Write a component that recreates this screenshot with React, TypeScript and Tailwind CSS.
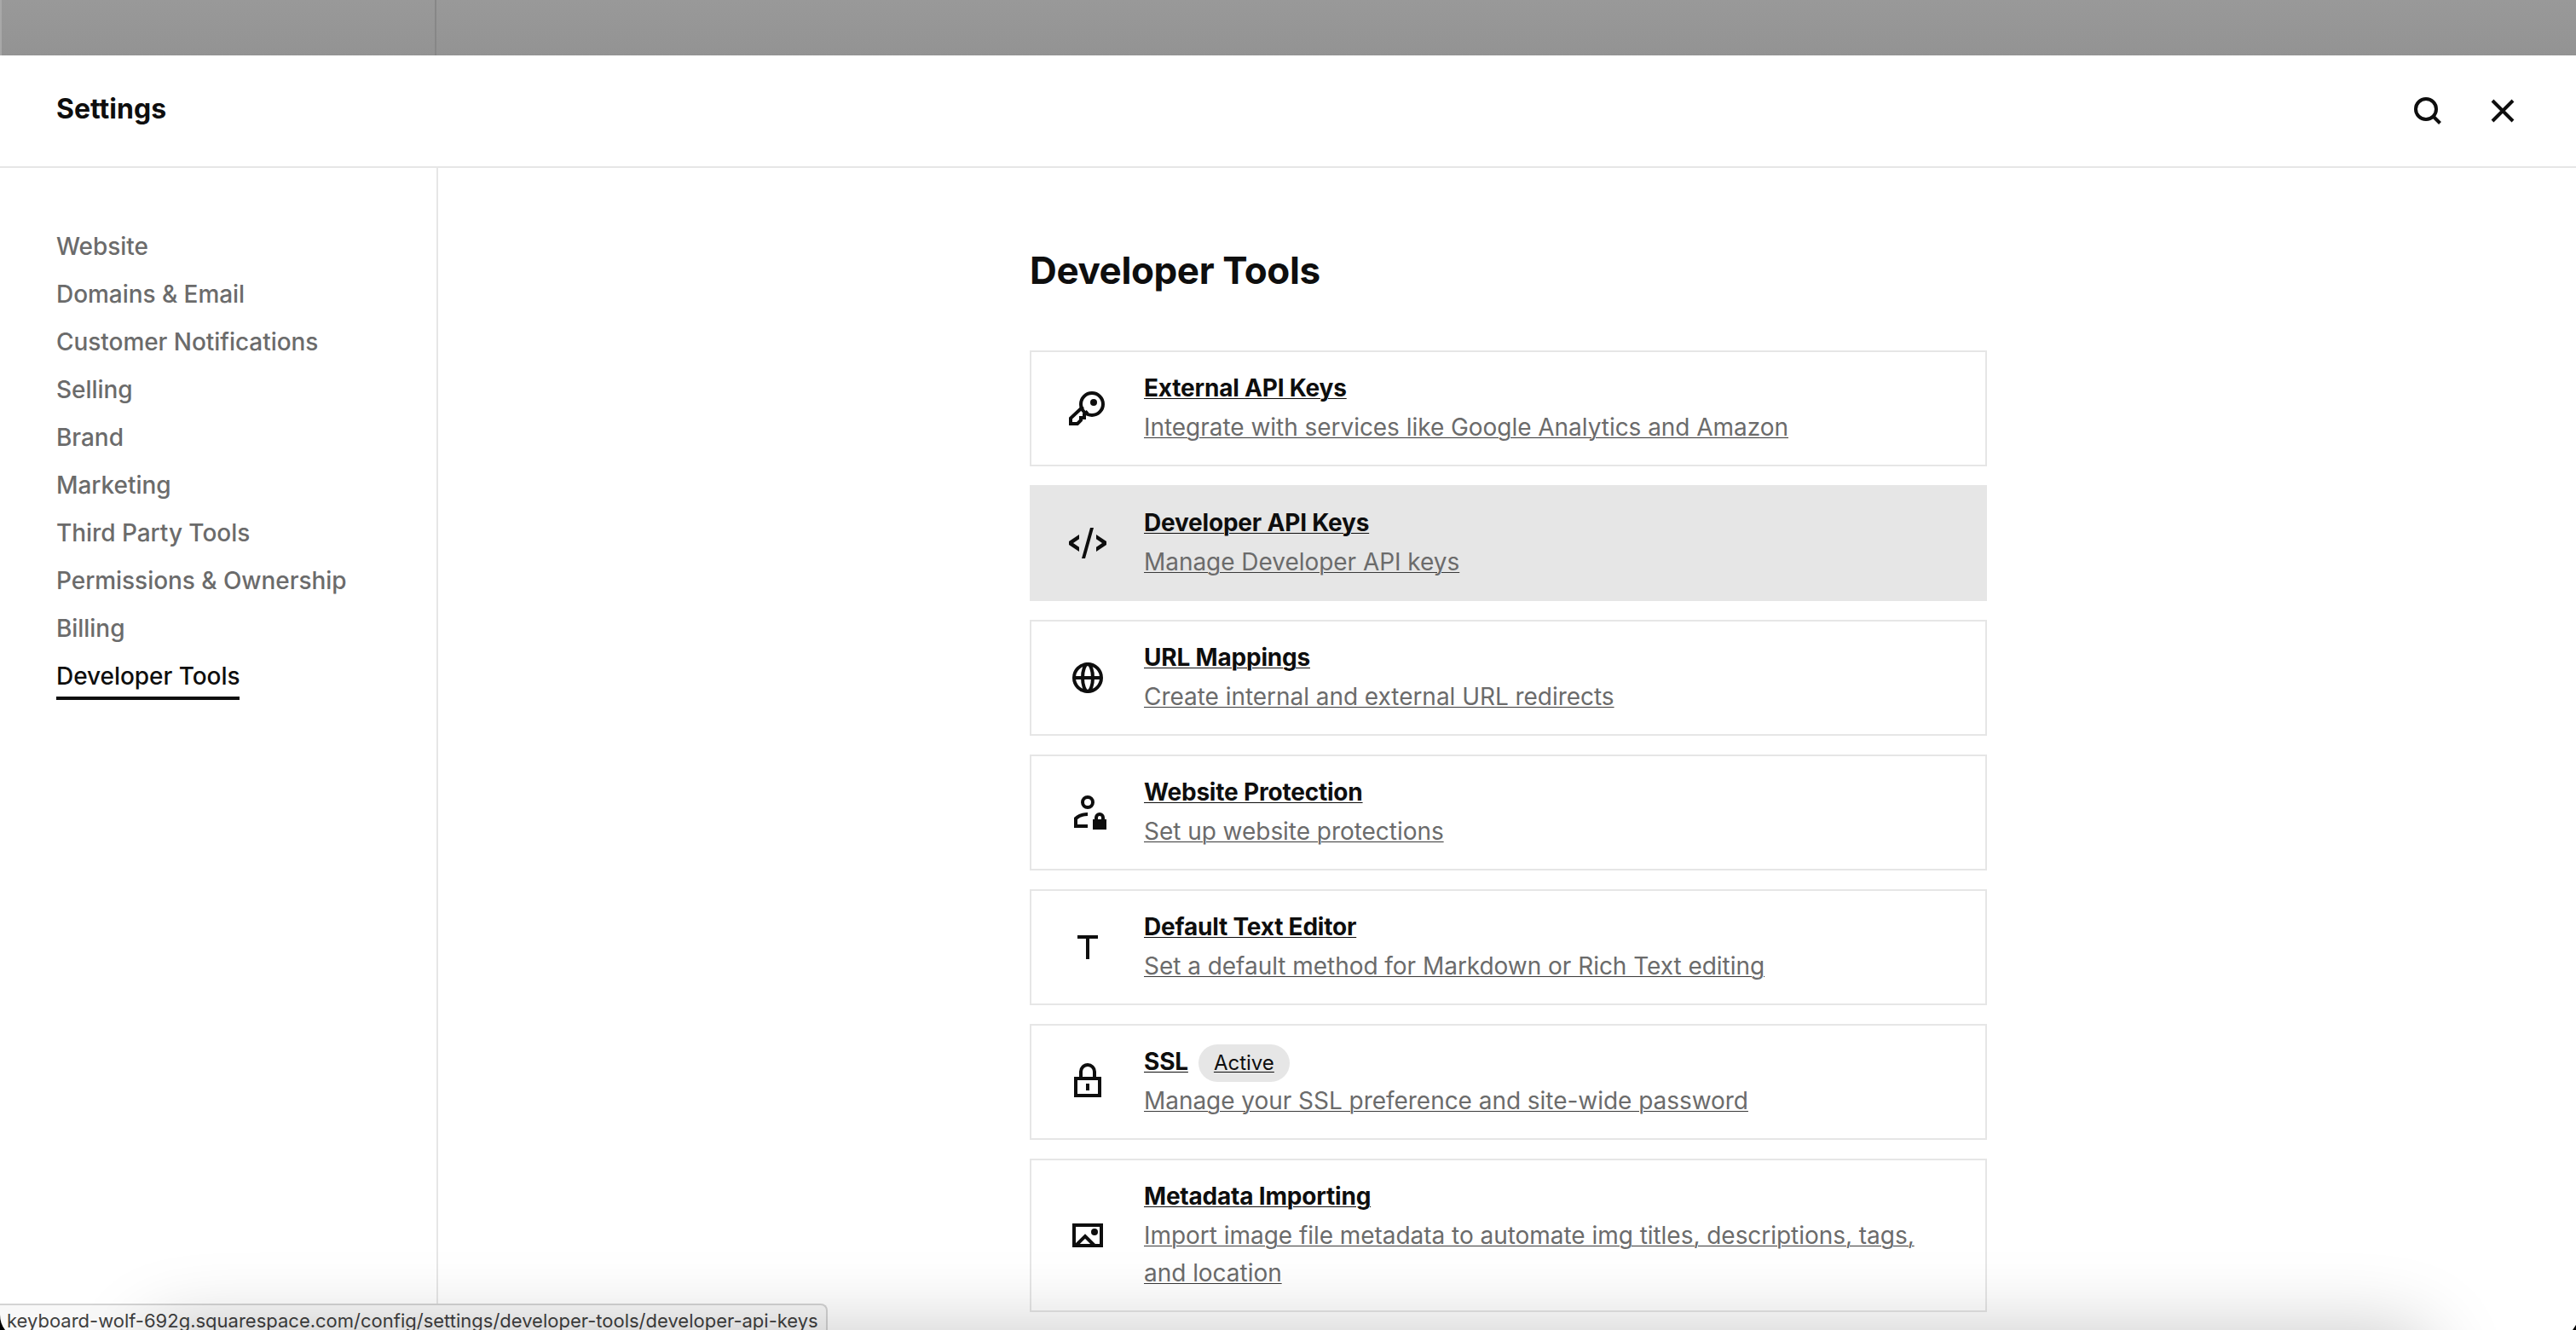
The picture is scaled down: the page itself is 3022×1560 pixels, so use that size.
import React from 'react';

interface Tool {
  title: string;
  description: string;
  icon: React.ReactNode;
  badge?: string;
  active?: boolean;
}

const navItems: string[] = [
  "Website",
  "Domains & Email",
  "Customer Notifications",
  "Selling",
  "Brand",
  "Marketing",
  "Third Party Tools",
  "Permissions & Ownership",
  "Billing",
  "Developer Tools"
];

const Icon: React.FC<{ children: React.ReactNode }> = ({ children }) => (
  <svg className="size-11 shrink-0" viewBox="0 0 44 44" fill="none" stroke="currentColor" strokeWidth={4}>
    {children}
  </svg>
);

const tools: Tool[] = [
  {
    title: "External API Keys",
    description: "Integrate with services like Google Analytics and Amazon",
    icon: (
      <Icon>
        <path d="M16.5 20 2 33.5V40h8l4-4v-3h4v-4l4-3.500" />
        <circle cx="27" cy="17" r="13" />
        <circle cx="29" cy="15" r="4" fill="currentColor" stroke="none" />
      </Icon>
    )
  },
  {
    title: "Developer API Keys",
    description: "Manage Developer API keys",
    active: true,
    icon: (
      <Icon>
        <path
          d="M12 12v5.200L5 22l7 4.800V32L0 24v-4zM32 12v5.200L39 22l-7 4.800V32l12-8v-4zM25 4h4L19 40h-4z"
          fill="currentColor"
          stroke="none"
        />
      </Icon>
    )
  },
  {
    title: "URL Mappings",
    description: "Create internal and external URL redirects",
    icon: (
      <Icon>
        <circle cx="22" cy="22" r="16" />
        <ellipse cx="22" cy="22" rx="6" ry="16" />
        <path d="M6 22h32" />
      </Icon>
    )
  },
  {
    title: "Website Protection",
    description: "Set up website protections",
    icon: (
      <Icon>
        <circle cx="22" cy="10" r="6" />
        <path d="M22 24c-5 0-10 1.500-14 5v9h14" />
        <path d="M32 31v-3a4 4 0 0 1 8 0v3" />
        <path d="M28 30h16v12H28z" fill="currentColor" stroke="none" />
      </Icon>
    )
  },
  {
    title: "Default Text Editor",
    description: "Set a default method for Markdown or Rich Text editing",
    icon: (
      <Icon>
        <path d="M10 10h24M22 10v26" />
      </Icon>
    )
  },
  {
    title: "SSL",
    description: "Manage your SSL preference and site-wide password",
    badge: "Active",
    icon: (
      <Icon>
        <path d="M8 18h28v20H8zM14 18v-8a8 8 0 0 1 16 0v8M22 24v8" />
      </Icon>
    )
  },
  {
    title: "Metadata Importing",
    description: "Import image file metadata to automate img titles, descriptions, tags, and location",
    icon: (
      <Icon>
        <path d="M6 10h32v24H6z" />
        <path d="m8 34 11-11 11 11" />
        <circle cx="30" cy="18" r="4" fill="currentColor" stroke="none" />
      </Icon>
    )
  }
];

const ToolCard: React.FC<{ tool: Tool }> = ({ tool }) => (
  <a
    href="#"
    className={`flex items-center border-2 border-[#e6e6e6] pl-11 pr-[66px] pt-5 pb-[22px] ${tool.active ? 'bg-[#e6e6e6]' : 'bg-white'}`}
  >
    <div className="mt-0.5">{tool.icon}</div>
    <div className="ml-11 flex flex-1 flex-col gap-0.5 text-[28px] leading-[44px]">
      <div className="flex h-11 items-start gap-3">
        <h3 className="font-bold tracking-[-0.2px] underline decoration-1 underline-offset-2">{tool.title}</h3>
        {tool.badge && (
          <span className="mt-0.5 h-11 rounded-full bg-[#e6e6e6] px-[18px] text-[24px] underline decoration-1 underline-offset-2">
            {tool.badge}
          </span>
        )}
      </div>
      <p className="tracking-[-0.04px] text-[#6b6b6b] underline decoration-[#3a3a3a] decoration-1 underline-offset-2">
        {tool.description}
      </p>
    </div>
  </a>
);

const App: React.FC = () => {
  return (
    <div className="relative flex h-[1560px] w-[3022px] flex-col overflow-hidden bg-white font-['Inter',sans-serif] text-[#0e0e0e]">
      {/* Dimmed page behind the settings panel */}
      <div className="flex h-[65px] shrink-0 bg-linear-to-b from-[#999999] to-[#939393]">
        <div className="w-[512px] border-x-2 border-l-[#a8a8a8] border-r-[#878787]"></div>
      </div>

      <header className="flex h-[132px] shrink-0 items-center justify-between border-b-2 border-[#e6e6e6] pl-[66px] pr-16">
        <h1 className="pb-1 text-[32px] font-bold">Settings</h1>
        <div className="flex gap-11">
          <button>
            <Icon>
              <circle cx="20" cy="20" r="12" />
              <path d="m28 28 8.500 8.500" />
            </Icon>
          </button>
          <button>
            <Icon>
              <path d="m10 10 24 24M34 10 10 34" />
            </Icon>
          </button>
        </div>
      </header>

      <div className="flex min-h-0 flex-1">
        <nav className="flex w-[514px] shrink-0 flex-col items-start gap-3 border-r-2 border-[#e6e6e6] pl-[66px] pt-[70px] text-[28px] font-medium leading-[44px] tracking-[-0.05px] text-[#6b6b6b]">
          {navItems.map((item) => (
            <a
              key={item}
              href="#"
              className={item === "Developer Tools" ? 'border-b-4 border-[#0e0e0e] pb-0.5 text-[#0e0e0e]' : ''}
            >
              {item}
            </a>
          ))}
        </nav>

        <main className="flex flex-1 flex-col items-center pl-[3px] pt-[87px]">
          <div className="w-[1123px]">
            <h2 className="mb-[61px] text-[44px] font-bold leading-[66px] tracking-[-0.4px]">Developer Tools</h2>
            <div className="flex flex-col gap-[22px]">
              {tools.map((tool) => (
                <ToolCard key={tool.title} tool={tool} />
              ))}
            </div>
          </div>
        </main>
      </div>

      {/* Link preview */}
      <div className="absolute bottom-0 left-0 h-[31px] w-[971px] rounded-tr-lg border-r-2 border-t-2 border-[#d4d4d4] bg-[#f8f8f8] pl-2 text-[22px] leading-9 text-[#3f3f3f]">
        keyboard-wolf-692g.squarespace.com/config/settings/developer-tools/developer-api-keys
      </div>

      {/* Shadow along the bottom edge of the window */}
      <div className="pointer-events-none absolute inset-x-[170px] top-full h-52 rounded-[40px] shadow-[0_0_90px_rgba(0,0,0,0.22)]"></div>

      {/* Rounded window corners */}
      <svg className="absolute bottom-0 left-0 h-[18px] w-1.5" viewBox="0 0 6 18">
        <path d="M0 0c0 7 2 13 6 18H0z" fill="#000" />
      </svg>
      <svg className="absolute bottom-0 right-0 h-1.5 w-1" viewBox="0 0 4 6">
        <path d="M4 0 0 6h4z" fill="#000" />
      </svg>
    </div>
  );
};

export default App;
